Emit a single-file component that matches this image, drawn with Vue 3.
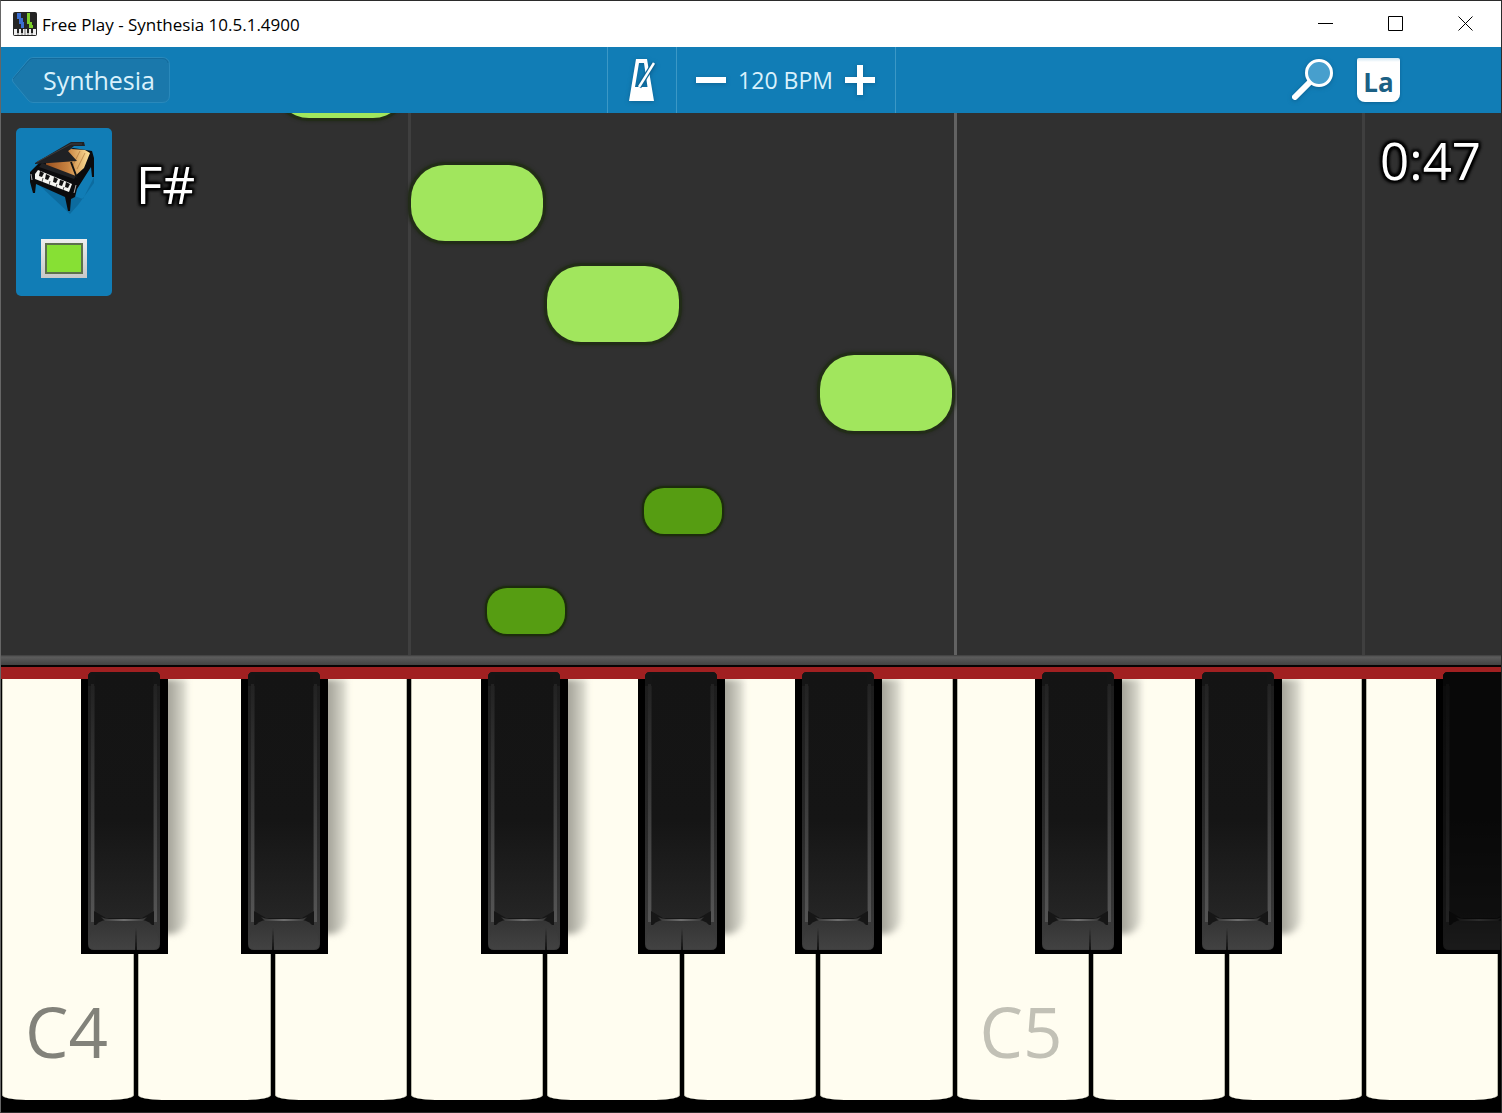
<script setup>
const whiteKeys = ['C4', 'D4', 'E4', 'F4', 'G4', 'A4', 'B4', 'C5', 'D5', 'E5', 'F5']
const labels = { C4: 'strong', C5: 'soft' }

// offset: start within the 1500-unit keyboard; seam: where the white keys meet under the cap
const blackKeys = [
  { name: 'C#4', offset: 80, seam: 55 },
  { name: 'D#4', offset: 240, seam: 32 },
  { name: 'F#4', offset: 480, seam: 65 },
  { name: 'G#4', offset: 637, seam: 44 },
  { name: 'A#4', offset: 794, seam: 23 },
  { name: 'C#5', offset: 1034, seam: 55 },
  { name: 'D#5', offset: 1194, seam: 32 },
  { name: 'F#5', offset: 1435, seam: 65, dim: true },
]

const notes = [
  { x: 274, y: -71 },
  { x: 410, y: 52 },
  { x: 546, y: 153 },
  { x: 819, y: 242 },
  { x: 643, y: 375, sharp: true },
  { x: 486, y: 475, sharp: true },
]

const guides = [
  { x: 407 },
  { x: 953, octave: true },
  { x: 1361 },
]

const pct = (n) => (n / 1500) * 100 + '%'
</script>

<template>
  <div class="window">
    <header class="titlebar">
      <svg class="app-icon" viewBox="0 0 24 24" aria-hidden="true">
        <rect width="24" height="24" rx="2" fill="#252525" />
        <path d="M4 1h4v5h2v4h1v6H8v-4H6V7H4z" fill="#3c6fd0" />
        <path d="M14 1h3v9h2v3h1v3h-4v-4h-2z" fill="#7ccf2c" />
        <path d="M1 17h22v6H1z" fill="#eee" />
        <path d="M4 16h2v5H4zM8 16h2v5H8zM14 16h2v5h-2zM18 16h2v5h-2z" fill="#222" />
        <path d="M5 21v2M9 21v2M12 17v6M15 21v2M19 21v2" stroke="#777" />
      </svg>
      <h1>Free Play - Synthesia 10.5.1.4900</h1>
      <div class="controls">
        <button aria-label="Minimize"><svg viewBox="0 0 16 16"><path d="M0 7.5h15" /></svg></button>
        <button aria-label="Maximize"><svg viewBox="0 0 16 16"><path d="M.5.5h14v14H.5z" /></svg></button>
        <button aria-label="Close"><svg viewBox="0 0 16 16"><path d="M.5.5l14 14M14.5.5l-14 14" /></svg></button>
      </div>
    </header>

    <nav class="toolbar">
      <div class="side">
        <button class="back">
          <svg viewBox="0 0 160 48" aria-hidden="true">
            <path d="M22 1.500H151Q158.500 1.500 158.500 9V39Q158.500 46.500 151 46.500H22Q19 46.500 17 44L2 26Q.5 24 2 22L17 4Q19 1.500 22 1.500Z" fill="#1a78ab" stroke="#2a89bb" />
            <path d="M2 23L18 4.500Q20 2.500 22 2.500H151Q156 2.500 157 7" fill="none" stroke="#146b9c" />
          </svg>
          <span>Synthesia</span>
        </button>
      </div>
      <button class="metronome" aria-label="Metronome">
        <svg viewBox="0 0 32 48" aria-hidden="true">
          <path fill-rule="evenodd" d="M10 3H21L28 45H3ZM13 7L9 31H21.500L18 7Z" fill="#fff" />
          <path d="M28 7L13 31" stroke="#0d6697" stroke-width="5" />
          <path d="M28 7L13 31" stroke="#fff" stroke-width="2.500" />
        </svg>
      </button>
      <div class="tempo">
        <button aria-label="Slower"><svg viewBox="0 0 32 32"><path d="M1 13h30v6H1z" fill="#fff" /></svg></button>
        <span>120 BPM</span>
        <button aria-label="Faster"><svg viewBox="0 0 32 32"><path d="M13 1h6v12h12v6H19v12h-6V19H1v-6h12z" fill="#fff" /></svg></button>
      </div>
      <div class="side tools">
        <button aria-label="Zoom">
          <svg class="lens" viewBox="0 0 44 44" aria-hidden="true">
            <path d="M5 39L20 24" stroke="#fff" stroke-width="6" stroke-linecap="round" />
            <circle cx="29" cy="15" r="12.500" fill="#479fcd" stroke="#fff" stroke-width="3" />
          </svg>
        </button>
        <button class="names">La</button>
      </div>
    </nav>

    <main class="lanes">
      <i v-for="g in guides" :key="g.x" class="guide" :class="{ octave: g.octave }" :style="{ left: pct(g.x) }"></i>
      <i v-for="n in notes" :key="n.x" class="note" :class="{ sharp: n.sharp }" :style="{ left: pct(n.x), top: n.y + 'px' }"></i>
      <div class="overlay">
        <button class="instrument" aria-label="Grand piano">
          <svg class="piano" viewBox="0 0 72 76" aria-hidden="true">
            <defs>
              <linearGradient id="wood" x1="0" x2="1">
                <stop offset="0" stop-color="#99501f" />
                <stop offset=".5" stop-color="#c98441" />
                <stop offset="1" stop-color="#ffe39a" />
              </linearGradient>
            </defs>
            <path d="M10 45L55 60L66 38V44L50 66L42 75Z" fill="#075a88" opacity=".5" />
            <path d="M2 33L13 22L45 9L64 12L66 19V38H64L63 28L49 50L47 58L43 60L42 72H40L37 58L8 45L7 54H5L2 43Z" fill="#0b0b0d" />
            <path d="M18 23L43 10L57 11L62 14L56 29L46 38L18 28Z" fill="url(#wood)" />
            <path d="M44 28L52 12M49 30L57 14" stroke="#a36a30" opacity=".6" />
            <path d="M7 24L43 3L56 3L57 7L46 7L40 12L49 22L7 25Z" fill="#202124" />
            <path d="M9 23L43 5L54 5" fill="none" stroke="#3d3e40" />
            <path d="M43 23L49 39" stroke="#111" stroke-width="2" />
            <path d="M14 24L48 37L46 40L11 28Z" fill="#202124" />
            <path d="M7 35L10 31L44 45L41 53L7 40Z" fill="#f5f5f1" />
            <path d="M12 32L11 37L14 38L16 34ZM18 35L17 40L20 41L22 37ZM26 38L25 43L28 44L30 40ZM32 41L31 46L34 47L36 42ZM38 43L37 48L40 49L42 45Z" fill="#111" />
            <path d="M15 39L14 43M22 42L21 46M29 45L28 48M36 48L35 51" stroke="#555" />
            <path d="M3 35L4 41M48 46L46 54" stroke="#aaa" />
          </svg>
          <span class="swatch"><i></i></span>
        </button>
        <span class="chord">F#</span>
        <time class="clock">0:47</time>
      </div>
    </main>

    <div class="rail"></div>

    <section class="keyboard" aria-label="Keyboard">
      <div class="felt"></div>
      <div class="whites">
        <button v-for="k in whiteKeys" :key="k" :aria-label="k" :class="labels[k]">{{ labels[k] ? k : '' }}</button>
      </div>
      <button v-for="k in blackKeys" :key="k.name" class="black" :class="{ dim: k.dim }" :aria-label="k.name" :style="{ left: pct(k.offset) }">
        <i class="shade"></i>
        <svg viewBox="0 0 87 282" preserveAspectRatio="none" aria-hidden="true">
          <defs>
            <linearGradient id="face" x2="0" y2="1">
              <stop offset="0" stop-color="#141414" />
              <stop offset=".6" stop-color="#151515" />
              <stop offset="1" stop-color="#252525" />
            </linearGradient>
            <linearGradient id="edge" x2="0" y2="1">
              <stop offset="0" stop-color="#1c1c1c" />
              <stop offset=".5" stop-color="#262626" />
              <stop offset="1" stop-color="#3c3c3c" />
            </linearGradient>
            <linearGradient id="ridge" x2="0" y2="1">
              <stop offset="0" stop-color="#222" />
              <stop offset="1" stop-color="#555" />
            </linearGradient>
            <linearGradient id="lip" x2="0" y2="1">
              <stop offset="0" stop-color="#343434" />
              <stop offset="1" stop-color="#424242" />
            </linearGradient>
            <linearGradient id="shine">
              <stop offset="0" stop-color="#333" />
              <stop offset=".5" stop-color="#6e6e6e" />
              <stop offset="1" stop-color="#333" />
            </linearGradient>
          </defs>
          <path d="M0 7H87V282H0Z" fill="#000" />
          <path d="M7 5Q7 0 12 0H74Q79 0 79 5V272Q79 278 73 278H13Q7 278 7 272Z" fill="url(#edge)" />
          <path d="M7 5Q7 0 12 0H74Q79 0 79 5V14H7Z" fill="#151515" />
          <path d="M10 12H13V250H10ZM73 12H76V250H73Z" fill="url(#ridge)" />
          <path d="M14 3H72V246H14Z" fill="url(#face)" />
          <path d="M13 239L25 246H61L73 239V253H13Z" fill="#161616" />
          <path d="M8 272Q10 250 25 248H61Q76 250 78 272Q78 277 73 277H13Q8 277 8 272Z" fill="url(#lip)" />
          <path d="M20 245Q24 247 28 247H58Q62 247 66 245L62 249H24Z" fill="url(#shine)" />
          <path :d="`M${k.seam - 1} 278L${k.seam} 256L${k.seam + 1} 278Z`" fill="#111" />
        </svg>
      </button>
    </section>
  </div>
</template>

<style>
body {
  margin: 0;
}
</style>

<style scoped>
.window {
  box-sizing: border-box;
  min-height: 100vh;
  display: flex;
  flex-direction: column;
  border: 1px solid #2b2b2b;
  border-left-color: #666;
  background: #303030;
  overflow: hidden;
  font-family: "Open Sans", "Noto Sans", sans-serif;
}
button {
  margin: 0;
  padding: 0;
  border: 0;
  background: none;
  font: inherit;
  color: inherit;
}
svg {
  display: block;
}

.titlebar {
  height: 46px;
  display: flex;
  align-items: center;
  padding-left: 12px;
  background: #fff;
  color: #000;
}
.app-icon {
  width: 24px;
  height: 24px;
}
h1 {
  margin: 2px 0 0 5px;
  flex: 1;
  font-size: 17px;
  font-weight: 400;
  line-height: 24px;
}
.controls {
  display: flex;
}
.controls button {
  width: 70px;
  height: 46px;
  display: grid;
  place-items: center;
}
.controls svg {
  width: 16px;
  height: 16px;
  fill: none;
  stroke: #000;
  stroke-width: 1;
}

.toolbar {
  height: 66px;
  display: grid;
  grid-template-columns: 1fr auto auto 1fr;
  background: #117db6;
  color: #d9f1fc;
}
.side {
  display: flex;
  align-items: center;
}
.back {
  display: grid;
  align-items: center;
  margin-left: 10px;
}
.back > * {
  grid-area: 1 / 1;
}
.back svg {
  width: 160px;
  height: 48px;
}
.back span {
  padding-left: 32px;
  text-align: left;
  font-size: 25px;
  line-height: 32px;
}
.metronome {
  width: 69px;
  display: grid;
  place-items: center;
  border-left: 1px solid #3b98c6;
}
.metronome svg {
  width: 32px;
  height: 48px;
}
.toolbar svg {
  filter: drop-shadow(0 1px 2px #0a5480aa);
}
.toolbar .back svg {
  filter: none;
}
.tempo {
  width: 220px;
  box-sizing: border-box;
  display: flex;
  align-items: center;
  justify-content: center;
  gap: 11px;
  border: solid #3b98c6;
  border-width: 0 1px;
  font-size: 23px;
}
.tempo svg {
  width: 32px;
  height: 32px;
}
.tools {
  justify-content: flex-end;
  gap: 23px;
  padding-right: 101px;
}
.lens {
  width: 44px;
  height: 44px;
}
.names {
  width: 43px;
  height: 44px;
  padding-top: 4px;
  box-sizing: border-box;
  border-radius: 2px 2px 8px 8px;
  background: linear-gradient(#cfe6f2, #fff 4px);
  box-shadow: 0 1px 3px #0a5480aa;
  color: #1b6084;
  font-size: 26px;
  font-weight: 700;
  line-height: 40px;
}

.lanes {
  flex: 1 0 542px;
  position: relative;
  overflow: hidden;
  background: #303030;
}
.guide {
  position: absolute;
  top: 0;
  bottom: 0;
  width: 3px;
  background: #3f3f3f;
}
.guide.octave {
  background: #626262;
}
.note {
  position: absolute;
  width: 132px;
  height: 76px;
  border-radius: 34px;
  background: #a1e65d;
  box-shadow: 0 0 0 3px #222c18, 0 0 3px 4px #262b21;
}
.note.sharp {
  width: 78px;
  height: 46px;
  border-radius: 20px;
  background: #569d12;
  box-shadow: 0 0 0 2px #1c2c0d, 0 0 2px 3px #262b21;
}
.overlay {
  position: relative;
  display: flex;
  align-items: flex-start;
  padding: 15px 20px 0 15px;
}
.instrument {
  width: 96px;
  height: 168px;
  display: flex;
  flex-direction: column;
  align-items: center;
  padding-top: 11px;
  box-sizing: border-box;
  border-radius: 5px;
  background: #117db6;
}
.piano {
  width: 72px;
  height: 76px;
}
.swatch {
  box-sizing: border-box;
  width: 46px;
  height: 39px;
  margin-top: 24px;
  padding: 4px;
  background: linear-gradient(#eee, #c8c8c8);
}
.swatch i {
  display: block;
  box-sizing: border-box;
  height: 31px;
  border: 2px solid #5d704d;
  background: #87e034;
}
.chord,
.clock {
  color: #fff;
  font-size: 51px;
  line-height: 64px;
  text-shadow: 0 0 3px #000, 0 0 4px #000, 2px 2px 3px #000, -2px -2px 3px #000, 2px -2px 3px #000, -2px 2px 3px #000;
}
.chord {
  flex: 1;
  margin: 24px 0 0 24px;
}

.rail {
  height: 12px;
  box-sizing: border-box;
  border-bottom: 2px solid #080404;
  background: linear-gradient(#3c3c3c, #5c5c5c 2px, #434343);
}
.keyboard {
  position: relative;
  overflow: hidden;
  background: #000;
}
.felt {
  height: 12px;
  background: #a12021;
}
.whites {
  display: flex;
  padding-bottom: 12px;
}
.whites button {
  flex: 1;
  height: 421px;
  display: flex;
  align-items: flex-end;
  box-sizing: border-box;
  margin-right: 3px;
  margin-left: 1px;
  padding: 0 0 27px 22px;
  border: solid #b9b9ab;
  border-width: 0 1px;
  border-radius: 0 0 24px 24px / 0 0 5px 5px;
  background: #fffdf0;
  font-size: 69px;
  line-height: 84px;
}
.whites .strong {
  color: #82827a;
}
.whites .soft {
  color: #c2c1b6;
}
.black {
  position: absolute;
  top: 5px;
  width: 5.800%;
  height: 282px;
}
.black svg {
  position: relative;
  width: 100%;
  height: 100%;
}
.shade {
  position: absolute;
  top: 7px;
  right: -19px;
  bottom: 20px;
  width: 30px;
  background: linear-gradient(90deg, #a5a49a 40%, #bbbaaf 60%, #e3e2d6);
  border-radius: 0 0 16px 0;
  filter: blur(3px);
  clip-path: inset(0 -10px -10px 0);
}
.dim svg {
  filter: brightness(0.4);
}
</style>
